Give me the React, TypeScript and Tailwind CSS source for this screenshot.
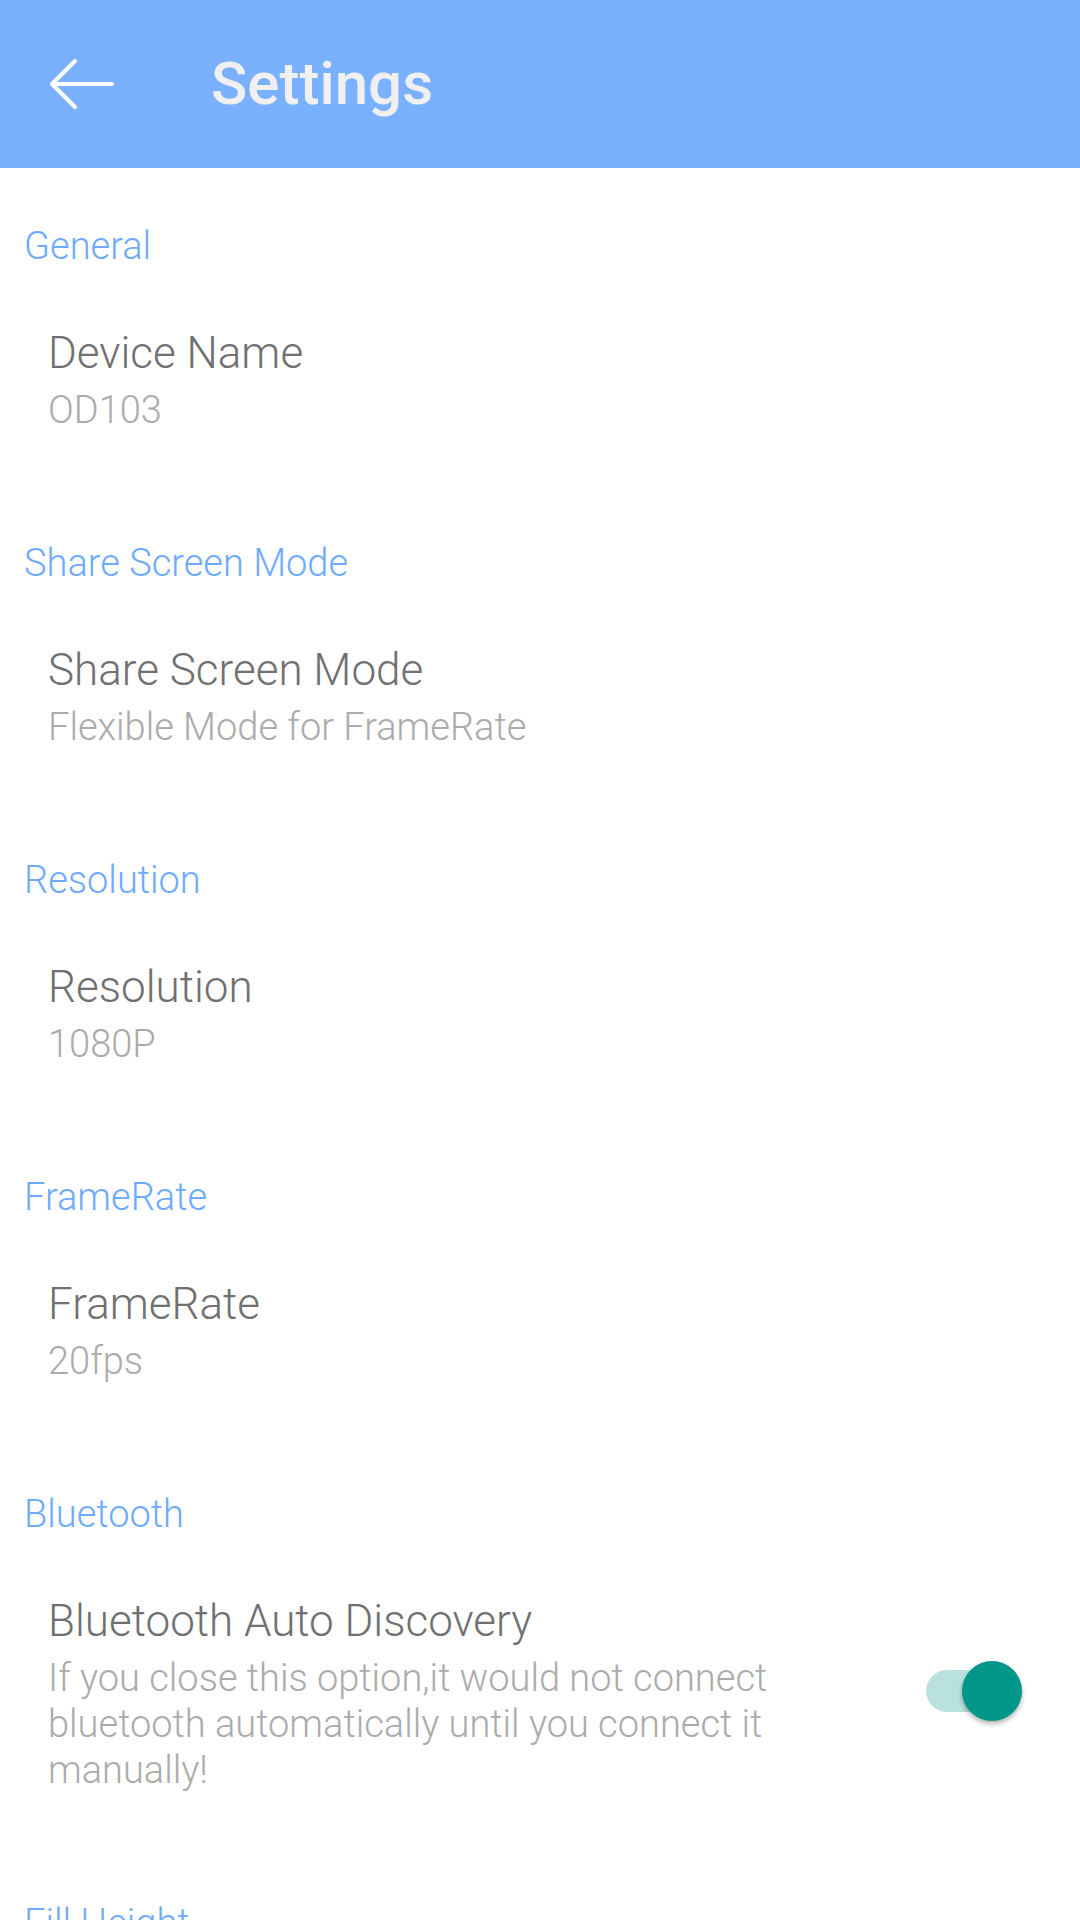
import React from "react";

type Item = {
  header: string;
  title: string;
  desc: string;
  toggle?: boolean;
};

const ITEMS: Item[] = [
  { header: "General", title: "Device Name", desc: "OD103" },
  { header: "Share Screen Mode", title: "Share Screen Mode", desc: "Flexible Mode for FrameRate" },
  { header: "Resolution", title: "Resolution", desc: "1080P" },
  { header: "FrameRate", title: "FrameRate", desc: "20fps" },
  {
    header: "Bluetooth",
    title: "Bluetooth Auto Discovery",
    desc: "If you close this option,it would not connect bluetooth automatically until you connect it manually!",
    toggle: true,
  },
  { header: "Fill Height", title: "Fill Height", desc: "" },
];

const Toggle = () => (
  <div className="relative w-[96px] h-[60px] flex items-center mr-[58px] mb-[12px] shrink-0">
    <div className="w-[96px] h-[42px] rounded-full bg-[#b9e2de]" />
    <div className="absolute right-0 top-0 w-[60px] h-[60px] rounded-full bg-[#009688] shadow-[0_3px_5px_rgba(0,0,0,0.3)]" />
  </div>
);

export default function App() {
  return (
    <div className="w-[1080px] h-[1920px] overflow-hidden bg-white font-['Roboto',sans-serif]">
      <div className="h-[168px] bg-[#7ab1fe] flex items-center">
        <div className="w-[211px] flex items-center pl-[48px]">
          <svg width="68" height="52" viewBox="0 0 68 52" fill="none">
            <path
              d="M4 26H64M27 3L4 26L27 49"
              stroke="white"
              strokeWidth="4"
              strokeLinecap="round"
              strokeLinejoin="round"
            />
          </svg>
        </div>
        <span className="text-[60px] font-medium text-[#f0f0f0] leading-none">Settings</span>
      </div>

      <div className="pt-[60px]">
        {ITEMS.map((item) => (
          <div key={item.header} className="pb-[112px]">
            <div className="pl-[24px] text-[38px] leading-[37px] font-light text-[#6eaaff]">
              {item.header}
            </div>
            <div className="flex items-center justify-between mt-[67px]">
              <div className="pl-[48px] w-[830px]">
                <div className="text-[44px] leading-[43px] font-light text-[#707070]">{item.title}</div>
                <div className="mt-[12px] text-[38px] leading-[46px] font-light text-[#ababab] w-[760px]">
                  {item.desc}
                </div>
              </div>
              {item.toggle && <Toggle />}
            </div>
          </div>
        ))}
      </div>
    </div>
  );
}
